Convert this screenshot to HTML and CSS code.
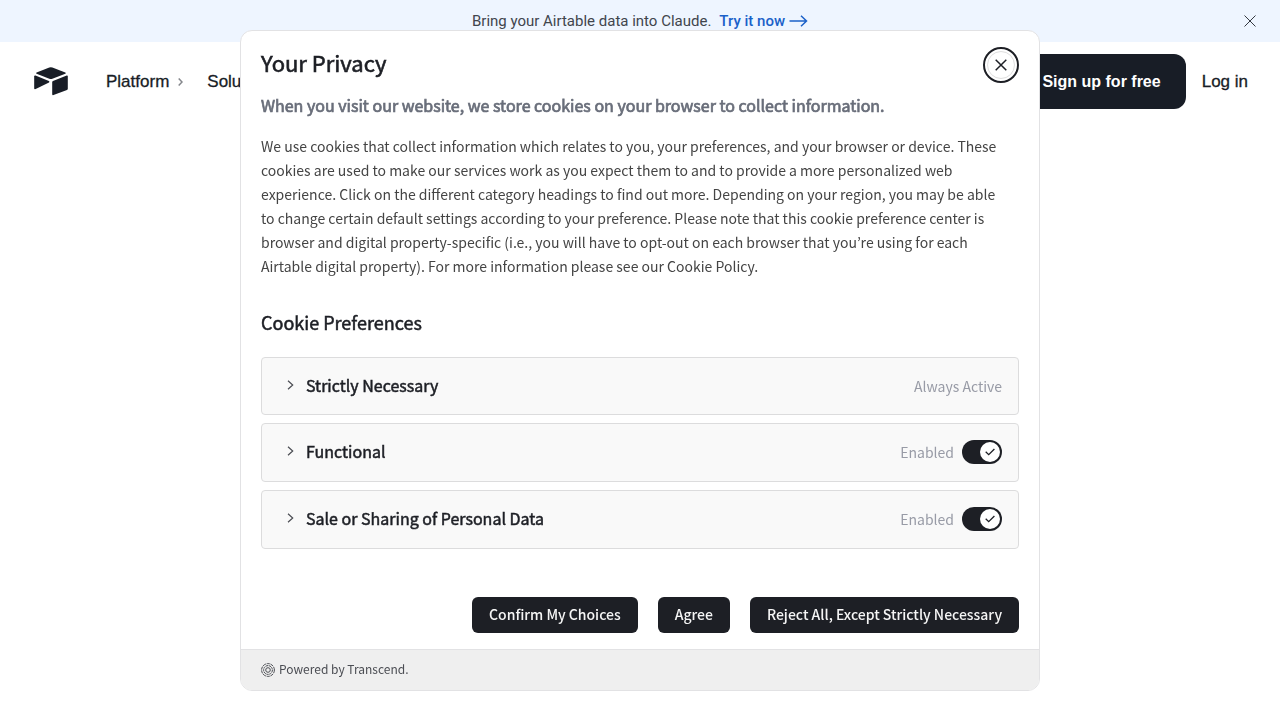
FILE: index.html
```html
<!DOCTYPE html>
<html lang="en">
<head>
<meta charset="utf-8">
<title>Airtable</title>
<link rel="stylesheet" href="styles.css">
</head>
<body>
<div class="promo">
  <p class="promo-text">Bring your Airtable data into Claude. <a class="promo-link" href="#">Try it now
    <svg class="promo-arrow" width="19" height="12" viewBox="0 0 19 12" aria-hidden="true"><path d="M0.500 6H17.500M12 0.800L17.500 6L12 11.200"/></svg></a></p>
  <button class="promo-close" type="button" aria-label="Dismiss">
    <svg width="12" height="12" viewBox="0 0 12 12" aria-hidden="true"><path d="M0.500 0.500L11.500 11.500M11.500 0.500L0.500 11.500"/></svg>
  </button>
</div>
<header class="site-header">
  <a class="logo" href="#" aria-label="Airtable">
    <svg width="34" height="29" viewBox="0 0 34 29" aria-hidden="true">
      <path d="M15.300 0.500L2.600 5.600Q1.600 6.200 2.600 6.700L15.300 11.700Q16.800 12.200 18.400 11.700L31.300 6.700Q32.200 6.200 31.300 5.600L18.400 0.500Q16.800 -0.100 15.300 0.500Z"/>
      <path d="M18.200 15V27.300Q18.300 28.500 19.500 28.100L33 22.900Q33.800 22.500 33.800 21.700V9.200Q33.700 8.300 32.700 8.600L19 13.900Q18.200 14.200 18.200 15Z"/>
      <path d="M15 15.500L1.700 22Q0.300 22.500 0.200 21.400V9.200Q0.400 8.200 1.500 8.600L14.900 14Q16 14.700 15 15.500Z"/>
    </svg>
  </a>
  <nav class="nav">
    <a class="nav-link" href="#">Platform <svg class="nav-chevron" width="5" height="8" viewBox="0 0 5 8" aria-hidden="true"><path d="M0.700 0.500L4 4L0.700 7.500"/></svg></a>
    <a class="nav-link" href="#">Solutions</a>
  </nav>
  <div class="account">
    <a class="signup" href="#">Sign up for free</a>
    <a class="nav-link" href="#">Log in</a>
  </div>
</header>

<div class="overlay">
  <section class="dialog" role="dialog" aria-labelledby="privacy-title">
    <div class="dialog-body">
      <div class="title-row">
        <h1 class="title" id="privacy-title">Your Privacy</h1>
        <button class="close" type="button" aria-label="Close">
          <svg width="12" height="12" viewBox="0 0 12 12" aria-hidden="true"><path d="M0.700 0.700L11.300 11.300M11.300 0.700L0.700 11.300"/></svg>
        </button>
      </div>
      <h2 class="lead">When you visit our website, we store cookies on your browser to collect information.</h2>
      <p class="copy">We use cookies that collect information which relates to you, your preferences, and your browser or device. These<br>
        cookies are used to make our services work as you expect them to and to provide a more personalized web<br>
        experience. Click on the different category headings to find out more. Depending on your region, you may be able<br>
        to change certain default settings according to your preference. Please note that this cookie preference center is<br>
        browser and digital property-specific (i.e., you will have to opt-out on each browser that you’re using for each<br>
        Airtable digital property). For more information please see our Cookie Policy.</p>
      <h2 class="section-title">Cookie Preferences</h2>
      <div class="purposes">
        <div class="purpose">
          <button class="purpose-name" type="button" aria-expanded="false"><svg class="chevron" width="7" height="10" viewBox="0 0 7 10" aria-hidden="true"><path d="M1 0.800L5.700 5L1 9.200"/></svg>Strictly Necessary</button>
          <span class="state">Always Active</span>
        </div>
        <div class="purpose">
          <button class="purpose-name" type="button" aria-expanded="false"><svg class="chevron" width="7" height="10" viewBox="0 0 7 10" aria-hidden="true"><path d="M1 0.800L5.700 5L1 9.200"/></svg>Functional</button>
          <label class="state">Enabled
            <span class="toggle"><input class="toggle-input" type="checkbox" aria-label="Functional" checked><svg class="tick" width="10" height="8" viewBox="0 0 10 8" aria-hidden="true"><path d="M0.700 3.800L3.700 6.700L9.400 1"/></svg></span>
          </label>
        </div>
        <div class="purpose">
          <button class="purpose-name" type="button" aria-expanded="false"><svg class="chevron" width="7" height="10" viewBox="0 0 7 10" aria-hidden="true"><path d="M1 0.800L5.700 5L1 9.200"/></svg>Sale or Sharing of Personal Data</button>
          <label class="state">Enabled
            <span class="toggle"><input class="toggle-input" type="checkbox" aria-label="Sale or Sharing of Personal Data" checked><svg class="tick" width="10" height="8" viewBox="0 0 10 8" aria-hidden="true"><path d="M0.700 3.800L3.700 6.700L9.400 1"/></svg></span>
          </label>
        </div>
      </div>
      <div class="actions">
        <button class="action" type="button">Confirm My Choices</button>
        <button class="action" type="button">Agree</button>
        <button class="action" type="button">Reject All, Except Strictly Necessary</button>
      </div>
    </div>
    <footer class="powered">
      <svg class="transcend" width="14" height="14" viewBox="0 0 14 14" aria-hidden="true"><circle cx="7" cy="7" r="6.400" stroke-dasharray="3.200 0.800"/><circle cx="7" cy="7" r="4.400" stroke-dasharray="2.400 0.600"/><circle cx="7" cy="7" r="2.300"/></svg>
      <a class="powered-link" href="#">Powered by Transcend.</a>
    </footer>
  </section>
</div>
</body>
</html>
```
FILE: styles.css
```css
* { box-sizing: border-box; }
body {
  margin: 0;
  background: #fff;
  color: #181d26;
  font-family: "Liberation Sans", Arial, sans-serif;
}
h1, h2, p { margin: 0; }
a { color: inherit; text-decoration: none; }
button { font: inherit; color: inherit; border: 0; background: none; padding: 0; cursor: pointer; }
svg { display: block; fill: none; stroke: currentColor; flex: none; }

.promo {
  display: flex;
  align-items: center;
  justify-content: center;
  height: 42px;
  padding: 0 24px;
  background: #eef5ff;
  position: relative;
}
.promo-text { display: flex; gap: 8px; font-family: Roboto, sans-serif; font-size: 15px; line-height: 20px; color: #41454d; }
.promo-link { display: flex; align-items: center; gap: 4px; color: #1b61c9; font-weight: 500; }
.promo-arrow { stroke-width: 1.5; }
.promo-close {
  position: absolute;
  right: 24px;
  top: 15px;
  color: #333840;
}

.site-header {
  display: flex;
  align-items: center;
  height: 79px;
  padding: 0 32px 0 34px;
  background: #fff;
  box-shadow: 0 4px 16px rgba(0, 0, 0, 0.06);
}
.logo svg { fill: #181d26; stroke: none; }
.nav { display: flex; gap: 24px; margin-left: 38px; flex: 1; }
.nav-link { display: flex; align-items: center; gap: 9px; font-size: 17px; line-height: 24px; -webkit-text-stroke: 0.3px; }
.nav-chevron { color: #85878c; stroke-width: 1.5; }
.account { display: flex; align-items: center; gap: 16px; }
.signup {
  padding: 16px 25px;
  border-radius: 12px;
  background: #181d26;
  color: #fff;
  font-size: 16px;
  font-weight: bold;
  line-height: 23px;
}

.overlay {
  position: fixed;
  inset: 0;
  display: flex;
  align-items: center;
  justify-content: center;
}
.dialog {
  width: 100%;
  max-width: 800px;
  border: 1px solid #e2e2e4;
  border-radius: 12px;
  overflow: hidden;
  background: #fff;
  color: #1d1f25;
  font-family: "Noto Sans CJK KR", "Noto Sans", sans-serif;
}
.dialog-body { padding: 16px 20px; }
.title-row { display: flex; align-items: flex-start; justify-content: space-between; height: 36px; }
.title { font-size: 22px; line-height: 30px; font-weight: 400; -webkit-text-stroke: 0.6px; }
.close {
  display: flex;
  align-items: center;
  justify-content: center;
  width: 28px;
  height: 28px;
  margin: 4px;
  border: 1px solid #dedede;
  border-radius: 50%;
  outline: 2px solid #1d1f25;
  outline-offset: 2px;
}
.close svg { stroke-width: 1.5; }
.lead { margin-top: 8px; font-size: 16px; line-height: 28px; font-weight: 400; color: #696e7a; -webkit-text-stroke: 0.7px; }
.copy { margin-top: 15px; font-size: 14px; line-height: 24px; color: #444; }
.section-title { margin-top: 30px; font-size: 18px; line-height: 28px; font-weight: 400; -webkit-text-stroke: 0.5px; }
.purposes { display: flex; flex-direction: column; gap: 8px; margin-top: 21px; }
.purpose {
  display: flex;
  align-items: center;
  justify-content: space-between;
  height: 59px;
  padding: 0 16px 0 25px;
  border: 1px solid #dcdcdd;
  border-radius: 4px;
  background: #f9f9f9;
}
.purpose:first-child { height: 58px; }
.purpose-name { display: flex; align-items: center; gap: 12px; padding-bottom: 2px; font-size: 16px; line-height: 24px; -webkit-text-stroke: 0.5px; }
.chevron { color: #4b4d53; stroke-width: 1.2; }
.state { display: flex; align-items: center; gap: 8px; font-size: 14px; line-height: 24px; color: #989ba6; }
.toggle { position: relative; display: flex; }
.toggle-input {
  appearance: none;
  width: 40px;
  height: 24px;
  margin: 0;
  padding: 2px;
  border-radius: 12px;
  background: #1d1f25;
  display: flex;
  justify-content: flex-end;
}
.toggle-input::before { content: ""; width: 20px; height: 20px; border-radius: 50%; background: #fff; }
.tick { position: absolute; right: 7px; top: 8px; color: #1d1f25; stroke-width: 1.3; }
.actions { display: flex; justify-content: flex-end; gap: 20px; margin-top: 48px; }
.action {
  height: 36px;
  padding: 0 17px 2px;
  border-radius: 6px;
  background: #1d1f25;
  color: #f5f5f5;
  font-size: 14px;
  font-weight: 500;
}
.powered {
  display: flex;
  align-items: center;
  gap: 4px;
  height: 41px;
  padding: 0 20px;
  border-top: 1px solid #e2e2e4;
  background: #efefef;
  color: #4b4d53;
}
.powered-link { padding-bottom: 2px; font-size: 12px; line-height: 20px; }
```
